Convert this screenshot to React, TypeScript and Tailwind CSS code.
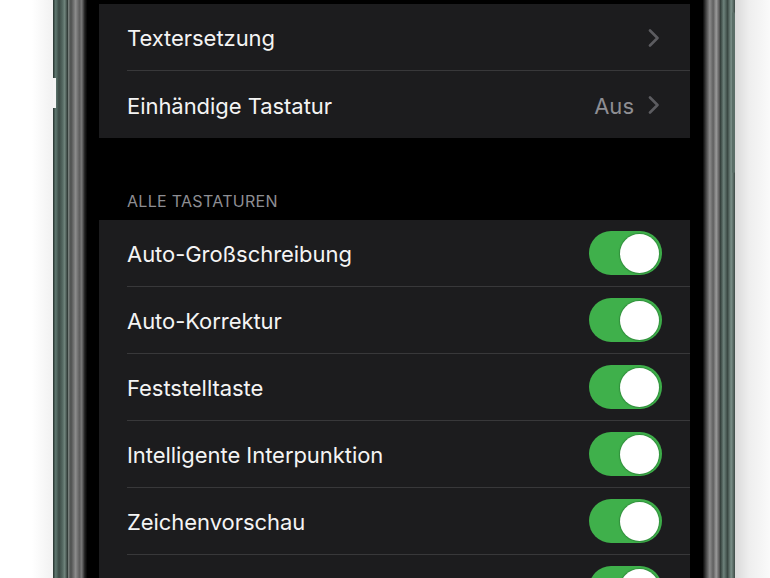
import React from 'react';

const font = { fontFamily: 'Inter, "Noto Sans", "Liberation Sans", sans-serif' };

function Chevron() {
    return (
        <svg width="12" height="18" viewBox="0 0 12 18" fill="none">
            <path d="M2 1.5 L9.5 9 L2 16.5" stroke="#5c5c60" strokeWidth="2.6" strokeLinecap="round" strokeLinejoin="round" />
        </svg>
    );
}

function Toggle() {
    return (
        <div className="w-[73px] h-[44px] shrink-0 rounded-full bg-[#3fb04b] flex items-center justify-end pr-[3px]">
            <div className="w-[39px] h-[39px] rounded-full bg-white shadow-[0_0_1px_1px_rgba(40,120,50,0.6)]" />
        </div>
    );
}

function Row({ label, value, chevron, toggle, last }: { label: string; value?: string; chevron?: boolean; toggle?: boolean; last?: boolean }) {
    return (
        <div className="pl-[28px] h-[67px] flex">
            <div className={`flex-1 flex items-center pr-[28px] ${last ? '' : 'border-b border-[#38383a]'}`}>
                <span className="flex-1 pt-[3px] whitespace-nowrap text-[22px] text-[#f4f4f4] tracking-[-0.05px]">{label}</span>
                {value && <span className="pt-[3px] text-[22px] text-[#8e8e93] mr-[14px]">{value}</span>}
                {chevron && <div className="mr-[2px] mt-[1px]"><Chevron /></div>}
                {toggle && <Toggle />}
            </div>
        </div>
    );
}

export default function App() {
    return (
        <div className="w-[770px] h-[578px] overflow-hidden flex bg-white" style={font}>
            <div className="w-[53px] shrink-0 bg-[linear-gradient(to_right,#ffffff_60%,#f1f1f1)]" />
            <div className="w-[15px] shrink-0 relative bg-[linear-gradient(to_right,#26322e,#5f7870_18%,#3b4a45_40%,#52665f_62%,#6f847c_78%,#28312e)]">
                <div className="absolute left-0 top-[78px] w-[3px] h-[30px] bg-[#f4f4f4]" />
            </div>
            <div className="w-[19px] shrink-0 bg-[linear-gradient(to_right,#7d8682,#4c4e4d_15%,#8c8c8c_40%,#5e5e5e_60%,#777_72%,#222_88%,#050505)]" />
            <div className="w-[616px] shrink-0 bg-black pt-[4px] pl-[12px] pr-[13px]">
                <div className="bg-[#1c1c1e]">
                    <Row label="Textersetzung" chevron />
                    <Row label="Einhändige Tastatur" value="Aus" chevron last />
                </div>
                <div className="h-[82px] flex items-end pl-[28px] pb-[7px]">
                    <span className="text-[16px] text-[#8e8e93] tracking-[0.3px]">ALLE TASTATUREN</span>
                </div>
                <div className="bg-[#1c1c1e]">
                    <Row label="Auto-Großschreibung" toggle />
                    <Row label="Auto-Korrektur" toggle />
                    <Row label="Feststelltaste" toggle />
                    <Row label="Intelligente Interpunktion" toggle />
                    <Row label="Zeichenvorschau" toggle />
                    <Row label="" toggle />
                </div>
            </div>
            <div className="w-[17px] shrink-0 bg-[linear-gradient(to_right,#080808,#3a3a3a_15%,#8a8a8a_40%,#606060_60%,#9a9a9a_78%,#4a4a4a)]" />
            <div className="w-[15px] shrink-0 relative bg-[linear-gradient(to_right,#2d3834,#6d827b_25%,#3a4843_50%,#7a8f88_75%,#3c4a45)]">
                <div className="absolute right-0 top-[12px] w-[3px] h-[161px] rounded-full bg-[#5a6e67]" />
            </div>
            <div className="flex-1 bg-[linear-gradient(to_right,#d9d9d9,#eeeeee_40%,#fafafa)]" />
        </div>
    );
}
